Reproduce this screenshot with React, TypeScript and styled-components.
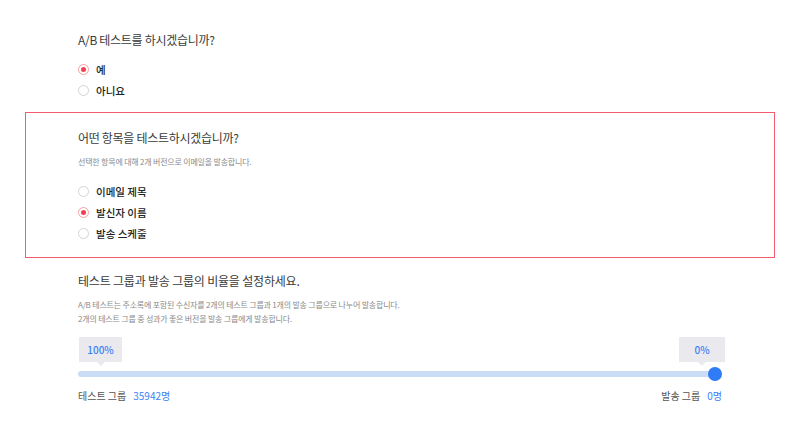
import React, { useState } from 'react'
import styled, { createGlobalStyle } from 'styled-components'

const GlobalStyle = createGlobalStyle`
  body {
    margin: 0;
    background: #ffffff;
    font-family: "Noto Sans CJK KR", "Noto Sans", sans-serif;
    color: #333333;
  }
`

const Page = styled.div`
  width: 800px;
  height: 434px;
  padding-top: 30px;
  box-sizing: border-box;
  overflow: hidden;
`

const Section = styled.div<{ highlight?: boolean; gapTop?: number }>`
  margin: ${(p) => (p.highlight ? '0 25px' : '0')};
  margin-top: ${(p) => p.gapTop ?? 0}px;
  padding: ${(p) => (p.highlight ? '15px 52px 15px' : '0 78px')};
  border: ${(p) => (p.highlight ? '1.5px solid #f25c6c' : 'none')};
`

const Title = styled.div<{ big?: boolean }>`
  font-size: 12px;
  line-height: 20px;
  color: #3a3a3a;
  letter-spacing: ${(p) => (p.big ? '-0.2px' : '-0.3px')};
`

const Desc = styled.div<{ gapTop: number }>`
  margin-top: ${(p) => p.gapTop}px;
  font-size: 8px;
  line-height: 14px;
  color: #8a8a8a;
  letter-spacing: -0.2px;
`

const RadioList = styled.div<{ gapTop: number }>`
  display: flex;
  flex-direction: column;
  gap: 3px;
  margin-top: ${(p) => p.gapTop}px;
`

const RadioRow = styled.label`
  display: flex;
  align-items: center;
  gap: 7px;
  height: 18px;
  font-size: 10.5px;
  font-weight: 500;
  color: #222222;
  cursor: pointer;
`

const RadioDot = styled.span<{ checked: boolean }>`
  width: 9px;
  height: 9px;
  border-radius: 50%;
  border: 1px solid ${(p) => (p.checked ? '#f6a1a8' : '#d4d4d4')};
  display: flex;
  align-items: center;
  justify-content: center;
  background: #fff;
  &::after {
    content: '';
    width: 5px;
    height: 5px;
    border-radius: 50%;
    background: ${(p) => (p.checked ? '#f0404f' : 'transparent')};
  }
`

const SliderBlock = styled.div`
  margin-top: 11px;
`

const Bubbles = styled.div`
  display: flex;
  justify-content: space-between;
  margin-right: -3px;
  margin-left: 1px;
`

const Bubble = styled.div<{ w: number }>`
  position: relative;
  width: ${(p) => p.w}px;
  height: 25px;
  background: #e9e9ee;
  color: #3b82f6;
  font-size: 10px;
  font-weight: 500;
  display: flex;
  align-items: center;
  justify-content: center;
  &::after {
    content: '';
    position: absolute;
    left: 50%;
    bottom: -4px;
    margin-left: -4px;
    border-left: 4px solid transparent;
    border-right: 4px solid transparent;
    border-top: 4px solid #e9e9ee;
  }
`

const Track = styled.div`
  position: relative;
  margin-top: 9px;
  margin-right: 7px;
  height: 6px;
  border-radius: 3px;
  background: #cadcf6;
`

const Thumb = styled.div`
  position: absolute;
  right: -7px;
  top: -4px;
  width: 14px;
  height: 14px;
  border-radius: 50%;
  background: #2f7cf6;
`

const Counts = styled.div`
  display: flex;
  justify-content: space-between;
  margin-top: 11px;
  font-size: 10px;
  color: #555555;
`

const Count = styled.span`
  color: #3b82f6;
  margin-left: 7px;
`

const Radio: React.FC<{ label: string; checked: boolean; onClick: () => void }> = ({
  label,
  checked,
  onClick,
}) => (
  <RadioRow onClick={onClick}>
    <RadioDot checked={checked} />
    {label}
  </RadioRow>
)

export default function App() {
  const [ab, setAb] = useState(0)
  const [item, setItem] = useState(1)
  const abOptions = ['예', '아니요']
  const items = ['이메일 제목', '발신자 이름', '발송 스케줄']

  return (
    <Page>
      <GlobalStyle />
      <Section>
        <Title>A/B 테스트를 하시겠습니까?</Title>
        <RadioList gapTop={10}>
          {abOptions.map((o, i) => (
            <Radio key={o} label={o} checked={ab === i} onClick={() => setAb(i)} />
          ))}
        </RadioList>
      </Section>

      <Section highlight gapTop={13}>
        <Title>어떤 항목을 테스트하시겠습니까?</Title>
        <Desc gapTop={7}>선택한 항목에 대해 2개 버전으로 이메일을 발송합니다.</Desc>
        <RadioList gapTop={13}>
          {items.map((o, i) => (
            <Radio key={o} label={o} checked={item === i} onClick={() => setItem(i)} />
          ))}
        </RadioList>
      </Section>

      <Section gapTop={13}>
        <Title big>테스트 그룹과 발송 그룹의 비율을 설정하세요.</Title>
        <Desc gapTop={7}>
          A/B 테스트는 주소록에 포함된 수신자를 2개의 테스트 그룹과 1개의 발송 그룹으로 나누어 발송합니다.
          <br />
          2개의 테스트 그룹 중 성과가 좋은 버전을 발송 그룹에게 발송합니다.
        </Desc>
        <SliderBlock>
          <Bubbles>
            <Bubble w={43}>100%</Bubble>
            <Bubble w={46}>0%</Bubble>
          </Bubbles>
          <Track>
            <Thumb />
          </Track>
          <Counts>
            <span>
              테스트 그룹<Count>35942명</Count>
            </span>
            <span>
              발송 그룹<Count>0명</Count>
            </span>
          </Counts>
        </SliderBlock>
      </Section>
    </Page>
  )
}
